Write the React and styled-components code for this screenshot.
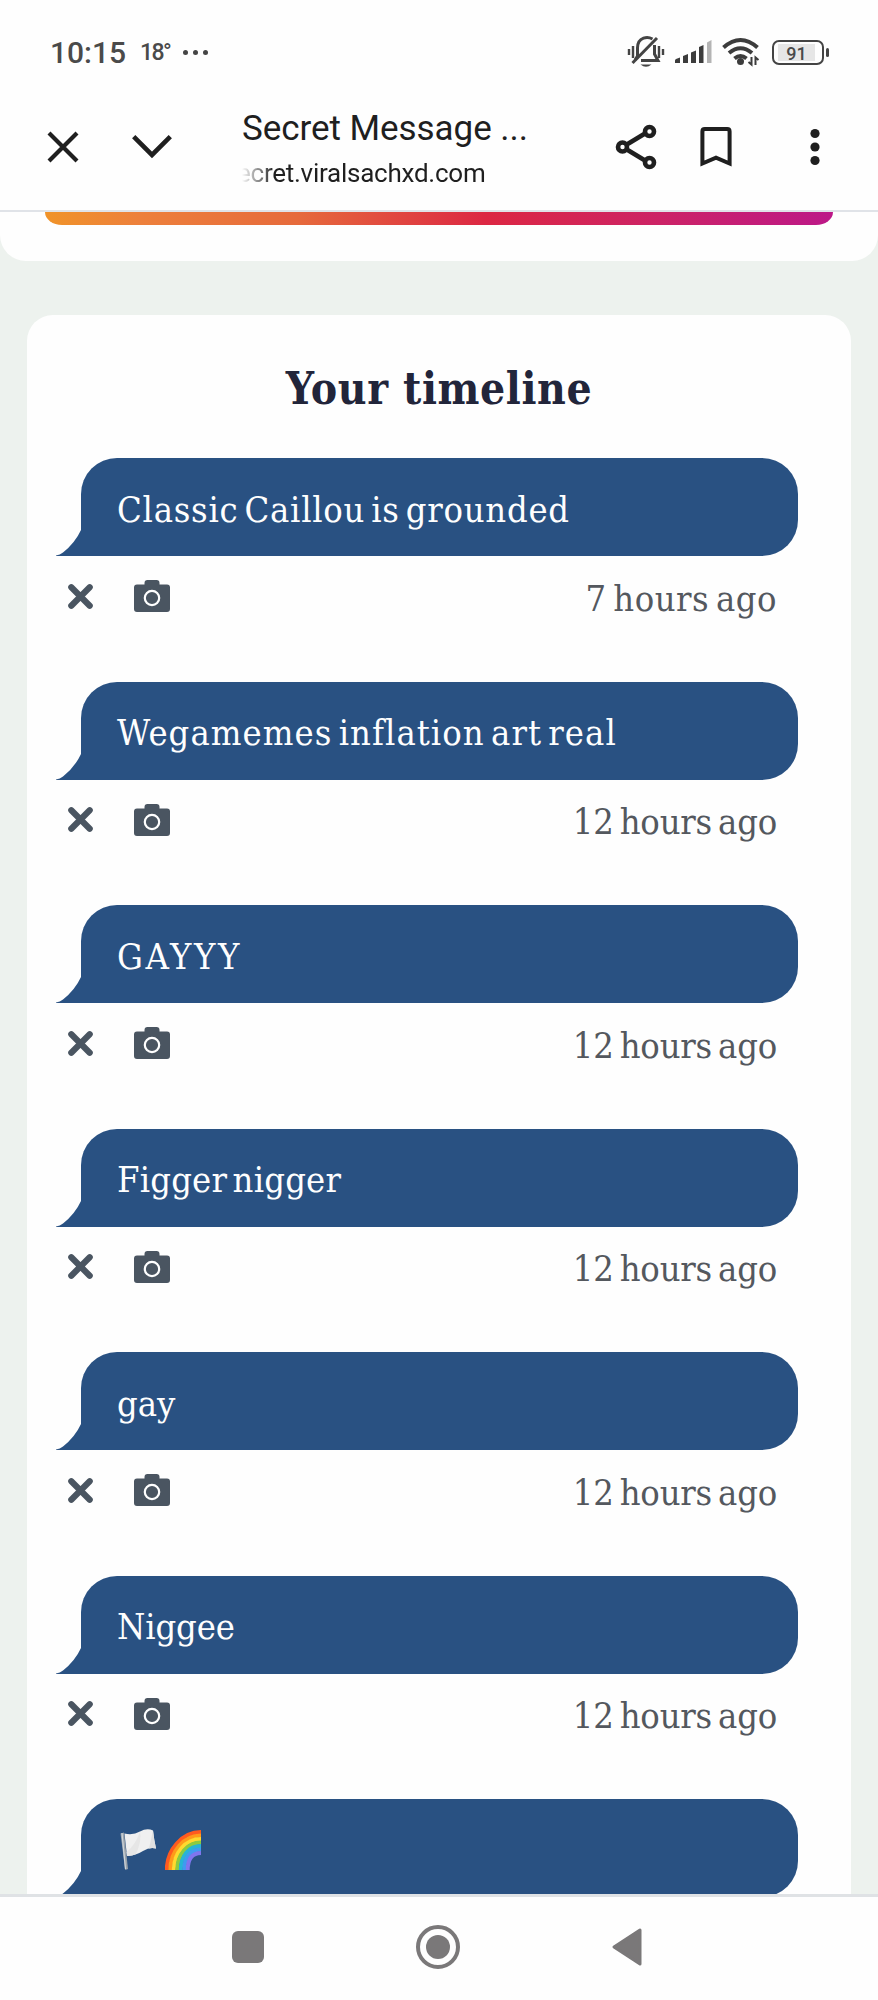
import React from "react";
import styled, { createGlobalStyle } from "styled-components";

const messages = [
  { id: 1, text: "Classic Caillou is grounded", tracking: 0.75, time: "7 hours ago", timeTracking: 0.5 },
  { id: 2, text: "Wegamemes inflation art real", tracking: 1.05, time: "12 hours ago" },
  { id: 3, text: "GAYYY", tracking: 2.6, time: "12 hours ago" },
  { id: 4, text: "Figger nigger", tracking: 0.2, time: "12 hours ago" },
  { id: 5, text: "gay", tracking: 0, time: "12 hours ago" },
  { id: 6, text: "Niggee", tracking: -0.1, time: "12 hours ago" },
  { id: 7, flag: true },
];

const MutedBell = () => (
  <svg width="38" height="34" viewBox="0 0 38 34" fill="none" stroke="#444" strokeWidth="3">
    <path d="M2 14v6M6 11v12M36 14v6M32 11v12" strokeWidth="2.400" />
    <path d="M10.500 21V13q0-7.500 6-9.800q4.500-1.700 9 .8M8 25l2.500-4" />
    <path d="M27.500 10v9l3.500 6.500H14" />
    <path d="M30 3L5.500 28" strokeWidth="3" />
    <path d="M13.500 29.500h11q-5.500 4.500-11 0z" fill="#444" stroke="none" />
  </svg>
);

const Signal = () => (
  <svg width="37" height="24" viewBox="0 0 37 24" fill="#3c3c3c">
    <path d="M0 20.500q0-1 1-1.500l4-1.500V23H0zM8 16l5-2v9H8zM16 12.500l5-2V23h-5zM24 7l4.500-2v18H24z" />
    <path d="M32 2.500L36.500 0v23H32z" fill="#b4b4b4" />
  </svg>
);

const Wifi = () => (
  <svg width="38" height="30" viewBox="0 0 38 30" fill="none" stroke="#3c3c3c" strokeWidth="4">
    <path d="M1.500 10.500Q18.500-4.500 35.500 10.500M7 16Q18.500 6.500 30 16M12.500 21.500q6-5 12 0" />
    <circle cx="18.500" cy="24.500" r="3.500" fill="#3c3c3c" stroke="none" />
    <path d="M29.500 20v7.500l-3-2.500M33.500 28v-7.500l3 2.500" strokeWidth="2" />
  </svg>
);

const CloseIcon = () => (
  <svg width="32" height="32" viewBox="0 0 32 32" stroke="#1f1f1f" strokeWidth="4.200">
    <path d="M2 2l28 28M30 2L2 30" />
  </svg>
);

const ChevronIcon = () => (
  <svg width="40" height="24" viewBox="0 0 40 24" fill="none" stroke="#1f1f1f" strokeWidth="4.600">
    <path d="M1.700 1.700L20 20 38.300 1.700" />
  </svg>
);

const ShareIcon = () => (
  <svg width="42" height="46" viewBox="0 0 42 46" fill="none" stroke="#1f1f1f" strokeWidth="4.600">
    <path d="M11 21L30 9.500M11 25l19 11.500" />
    <circle cx="7.500" cy="23" r="4.500" />
    <circle cx="34.500" cy="7.500" r="4.500" />
    <circle cx="34.500" cy="38.500" r="4.500" />
  </svg>
);

const BookmarkIcon = () => (
  <svg width="32" height="40" viewBox="0 0 32 40" fill="none" stroke="#1f1f1f" strokeWidth="4">
    <path d="M2.400 36.500V4.500q0-2.400 2.400-2.400h22.400q2.400 0 2.400 2.400v32L16 30.700z" />
  </svg>
);

const DotsIcon = () => (
  <svg width="10" height="38" viewBox="0 0 10 38" fill="#1f1f1f">
    <circle cx="5" cy="5.500" r="4.600" />
    <circle cx="5" cy="19" r="4.600" />
    <circle cx="5" cy="32.500" r="4.600" />
  </svg>
);

const RemoveIcon = () => (
  <svg width="25" height="25" viewBox="0 0 25 25" stroke="#4a5561" strokeWidth="6.200" strokeLinecap="round">
    <path d="M3.300 3.300l18.400 18.400M21.700 3.300L3.300 21.700" />
  </svg>
);

const CameraIcon = () => (
  <svg width="36" height="32" viewBox="0 0 36 32">
    <path
      d="M3 4.500h7.500V3q0-3 3-3h9q3 0 3 3v1.500H33q3 0 3 3V29q0 3-3 3H3q-3 0-3-3V7.500q0-3 3-3z"
      fill="#4a5561"
    />
    <circle cx="18" cy="18" r="7.200" fill="none" stroke="#fff" strokeWidth="2.200" />
  </svg>
);

const FlagIcon = () => (
  <svg width="38" height="42" viewBox="0 0 38 42" role="img" aria-label="white flag">
    <path d="M0.500 4.500l3.500-1 4 36.500-2.800 1z" fill="#9aa3ab" />
    <path d="M2 4l3.500 36" stroke="#cfd5da" strokeWidth="1.200" />
    <path d="M4.500 4.500Q13 6.500 20 2.500t13-1q1 9 3 18-6-2-13 2.500T7 27z" fill="#f0f0f0" />
    <path d="M20 2.500q2 9-4 22.500-4 2.300-9 2l-.500-4q9-7 13.500-20.500z" fill="#e6e6e6" />
    <path d="M33 1.500q1 9 3 18-4-1-7 0 2-9 4-18z" fill="#e0e0e0" />
  </svg>
);

const rainbow = ["#ff5a1f", "#ff9a1a", "#ffd92e", "#8ccb3f", "#27b5d4", "#3f9bf0", "#7f76ee"];

const RainbowIcon = () => (
  <svg width="36" height="40" viewBox="0 0 36 40" role="img" aria-label="rainbow">
    {rainbow.map((color, i) => (
      <path
        key={color}
        d={`M${1.750 + i * 3.500} 40C${1.750 + i * 3.500} ${20 + i * 1.500} ${17 + i * 1.700} ${2 + i * 3.500} 36 ${2 + i * 3.500}`}
        fill="none"
        stroke={color}
        strokeWidth="3.900"
      />
    ))}
  </svg>
);

const Tail = () => (
  <TailSvg width="26" height="28" viewBox="0 0 26 28">
    <path d="M25 2Q19 15 7 24.500 4 27 0 27.400V28h26V0z" fill="#295182" />
  </TailSvg>
);

const Message = ({ item }) => {
  const { text, tracking, flag, time, timeTracking } = item;
  return (
    <Item>
      <Bubble>
        <Tail />
        {flag ? (
          <Emojis>
            <FlagIcon />
            <RainbowIcon />
          </Emojis>
        ) : (
          <Text $tracking={tracking}>{text}</Text>
        )}
      </Bubble>
      {time && (
        <Meta>
          <Actions>
            <RemoveIcon />
            <CameraIcon />
          </Actions>
          <Time $tracking={timeTracking}>{time}</Time>
        </Meta>
      )}
    </Item>
  );
};

const App = () => (
  <Screen>
    <GlobalStyle />
    <StatusBar>
      <Clock>10:15</Clock>
      <Temp>18°</Temp>
      <More>
        <i />
        <i />
        <i />
      </More>
      <StatusIcons>
        <MutedBell />
        <Signal />
        <Wifi />
        <Battery>
          <Level>91</Level>
        </Battery>
      </StatusIcons>
    </StatusBar>
    <Toolbar>
      <LeftTools>
        <CloseIcon />
        <ChevronIcon />
      </LeftTools>
      <PageInfo>
        <Title>Secret Message ...</Title>
        <Url>
          <span>ecret.viralsachxd.com</span>
        </Url>
      </PageInfo>
      <RightTools>
        <ShareIcon />
        <BookmarkIcon />
        <DotsIcon />
      </RightTools>
    </Toolbar>
    <Content>
      <TopCard>
        <GradientButton />
      </TopCard>
      <Timeline>
        <Heading>Your timeline</Heading>
        {messages.map((item) => (
          <Message key={item.id} item={item} />
        ))}
      </Timeline>
    </Content>
    <NavBar>
      <Recent />
      <Home />
      <svg width="30" height="38" viewBox="0 0 30 38">
        <path d="M2 19L28 2v34z" fill="#7a7879" stroke="#7a7879" strokeWidth="3" strokeLinejoin="round" />
      </svg>
    </NavBar>
  </Screen>
);

const GlobalStyle = createGlobalStyle`
  * {
    box-sizing: border-box;
  }
  body {
    margin: 0;
    background: #fefefe;
  }
  svg {
    display: block;
    flex: none;
  }
`;

const Screen = styled.div`
  width: 878px;
  height: 2000px;
  display: flex;
  flex-direction: column;
  overflow: hidden;
  background: #fefefe;
  font-family: "DejaVu Serif Condensed", "DejaVu Serif", serif;
`;

const StatusBar = styled.div`
  height: 104px;
  flex: none;
  display: flex;
  align-items: center;
  padding: 0 50px 0 50px;
  font-family: Roboto, sans-serif;
  color: #4a4a4a;
`;

const Clock = styled.span`
  width: 90px;
  font-size: 30px;
  font-weight: 500;
  letter-spacing: 0;
`;

const Temp = styled.span`
  width: 43px;
  font-size: 23px;
  font-weight: 500;
  letter-spacing: -1.6px;
`;

const More = styled.span`
  display: flex;
  gap: 5px;
  i {
    width: 5px;
    height: 5px;
    border-radius: 50%;
    background: #444;
  }
`;

const StatusIcons = styled.div`
  display: flex;
  align-items: center;
  gap: 10px;
  margin-left: auto;
`;

const Battery = styled.div`
  position: relative;
  width: 52px;
  height: 25px;
  margin: 0 4px 0 2px;
  padding: 2px 4px;
  border: 2px solid #444;
  border-radius: 7px;
  &::after {
    content: "";
    position: absolute;
    right: -7px;
    top: 6px;
    width: 3px;
    height: 9px;
    border-radius: 2px;
    background: #444;
  }
`;

const Level = styled.div`
  height: 17px;
  line-height: 19px;
  width: 37px;
  background: #e6e6e6;
  text-align: center;
  font-size: 18px;
  font-weight: 500;
`;

const Toolbar = styled.div`
  height: 108px;
  flex: none;
  display: flex;
  border-bottom: 2px solid #e0e3e8;
  padding: 0 58px 0 47px;
`;

const LeftTools = styled.div`
  height: 86px;
  width: 195px;
  display: flex;
  align-items: center;
  gap: 53px;
`;

const PageInfo = styled.div`
  padding-top: 1px;
  font-family: Roboto, sans-serif;
  color: #1f1f1f;
  white-space: nowrap;
`;

const Title = styled.div`
  font-size: 35px;
  line-height: 48px;
  letter-spacing: -0.05px;
`;

const Url = styled.div`
  width: 250px;
  overflow: hidden;
  font-size: 26px;
  line-height: 40px;
  letter-spacing: -0.25px;
  mask-image: linear-gradient(to right, transparent, #000 32px);
  span {
    margin-left: -5px;
  }
`;

const RightTools = styled.div`
  height: 86px;
  margin-left: auto;
  display: flex;
  align-items: center;
  svg:nth-child(2) {
    margin: 0 78px 0 43px;
  }
`;

const Content = styled.main`
  flex: 1;
  min-height: 0;
  overflow: hidden;
  background: #edf2ee;
`;

const TopCard = styled.div`
  height: 49px;
  padding: 0 45px;
  background: #fefefe;
  border-radius: 0 0 26px 26px;
`;

const GradientButton = styled.div`
  height: 13px;
  border-radius: 0 0 17px 17px / 0 0 13px 13px;
  background: linear-gradient(to right, #f09329, #ed803c 12%, #e66a3c 32%, #dc2743 56%, #cc2366 78%, #bc1888);
`;

const Timeline = styled.section`
  width: 824px;
  height: 1700px;
  margin: 54px auto 0;
  padding-top: 45px;
  border-radius: 26px;
  background: #fefefe;
`;

const Heading = styled.h2`
  margin: 0;
  height: 98px;
  line-height: 58px;
  text-align: center;
  font-size: 44px;
  font-weight: 700;
  letter-spacing: 0.6px;
  color: #22253a;
`;

const Item = styled.article`
  height: 223.560px;
`;

const Bubble = styled.div`
  position: relative;
  height: 98px;
  width: 717px;
  margin-left: 54px;
  padding: 4px 36px 0;
  display: flex;
  align-items: center;
  border-radius: 36px 36px 36px 0;
  background: #295182;
  color: #fefefe;
  font-size: 36px;
`;

const Text = styled.span`
  letter-spacing: ${(props) => props.$tracking}px;
  word-spacing: -5px;
`;

const TailSvg = styled.svg`
  position: absolute;
  left: -25px;
  bottom: 0;
`;

const Emojis = styled.span`
  display: flex;
  align-items: center;
  gap: 7px;
  padding-left: 3px;
`;

const Meta = styled.div`
  height: 86px;
  padding: 0 74px 0 41px;
  display: flex;
  align-items: center;
  justify-content: space-between;
`;

const Actions = styled.div`
  display: flex;
  align-items: center;
  gap: 41px;
  padding-bottom: 6px;
`;

const Time = styled.span`
  padding-bottom: 2px;
  font-size: 36px;
  letter-spacing: ${(props) => props.$tracking ?? -0.2}px;
  word-spacing: -4px;
  color: #54585e;
`;

const NavBar = styled.nav`
  height: 106px;
  flex: none;
  display: flex;
  align-items: center;
  padding: 0 0 4px 232px;
  border-top: 3px solid #dfe2e5;
  svg {
    margin-left: 152px;
  }
`;

const Recent = styled.div`
  width: 32px;
  height: 32px;
  border-radius: 6px;
  background: #7a7879;
`;

const Home = styled.div`
  width: 44px;
  height: 44px;
  margin-left: 152px;
  padding: 6px;
  border: 4px solid #7a7879;
  border-radius: 50%;
  &::before {
    content: "";
    display: block;
    width: 24px;
    height: 24px;
    border-radius: 50%;
    background: #7a7879;
  }
`;

export default App;
